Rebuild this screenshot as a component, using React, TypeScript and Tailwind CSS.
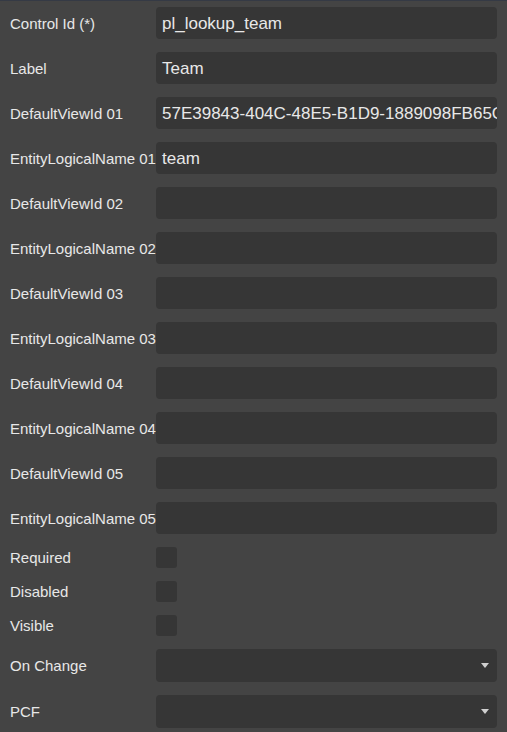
import React from "react";

const textRows: [string, string][] = [
  ["Control Id (*)", "pl_lookup_team"],
  ["Label", "Team"],
  ["DefaultViewId 01", "57E39843-404C-48E5-B1D9-1889098FB65C"],
  ["EntityLogicalName 01", "team"],
  ["DefaultViewId 02", ""],
  ["EntityLogicalName 02", ""],
  ["DefaultViewId 03", ""],
  ["EntityLogicalName 03", ""],
  ["DefaultViewId 04", ""],
  ["EntityLogicalName 04", ""],
  ["DefaultViewId 05", ""],
  ["EntityLogicalName 05", ""],
];

const checks = ["Required", "Disabled", "Visible"];
const selects = ["On Change", "PCF"];

export default function App() {
  return (
    <div
      className="w-[507px] h-[732px] bg-[#444444] border-t border-[#353a45] overflow-hidden text-[#e8e8e8]"
      style={{ fontFamily: '"Liberation Sans", Arial, sans-serif' }}
    >
      <div className="flex flex-col gap-[13px] pt-[6px] pl-[10px] pr-[10px]">
        {textRows.map(([label, value]) => (
          <div key={label} className="flex items-center h-[32px]">
            <div className="w-[146px] shrink-0 text-[15px] whitespace-nowrap leading-none">{label}</div>
            <div className="flex-1 min-w-0 h-[32px] rounded-[4px] bg-[#363636] flex items-center pl-[6px] overflow-hidden">
              <span className="text-[17px] whitespace-nowrap leading-none">{value}</span>
            </div>
          </div>
        ))}
        {checks.map((label) => (
          <div key={label} className="flex items-center h-[21px]">
            <div className="w-[146px] shrink-0 text-[15px] whitespace-nowrap leading-none">{label}</div>
            <div className="w-[21px] h-[21px] rounded-[3px] bg-[#363636]" />
          </div>
        ))}
        {selects.map((label) => (
          <div key={label} className="flex items-center h-[33px]">
            <div className="w-[146px] shrink-0 text-[15px] whitespace-nowrap leading-none">{label}</div>
            <div className="flex-1 h-[33px] rounded-[4px] bg-[#363636] flex items-center justify-end pr-[8px]">
              <svg width="8" height="5" viewBox="0 0 8 5">
                <polygon points="0,0 8,0 4,5" fill="#d0d0d0" />
              </svg>
            </div>
          </div>
        ))}
      </div>
    </div>
  );
}
